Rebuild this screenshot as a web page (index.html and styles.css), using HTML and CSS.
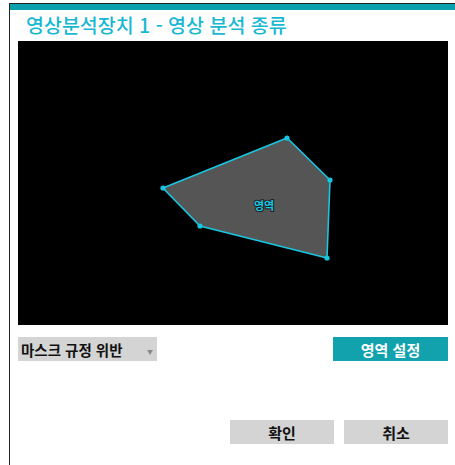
FILE: index.html
```html
<!DOCTYPE html>
<html lang="ko">
    <head>
        <title>영상 분석 종류</title>
        <link rel="stylesheet" href="styles.css">
    </head>

    <body>
        <div class="window">
            <div class="titleBar"></div>
            <div class="content">
                <h1 class="title">영상분석장치 1 - 영상 분석 종류</h1>

                <div class="preview">
                    <svg width="430" height="284" viewBox="0 0 430 284">
                        <polygon points="145,147 269,97 312,139 309,217 182,185" fill="#555555" stroke="#19c6e0" stroke-width="1.6"/>
                        <circle cx="145" cy="147" r="2.6" fill="#19c6e0"/>
                        <circle cx="269" cy="97" r="2.6" fill="#19c6e0"/>
                        <circle cx="312" cy="139" r="2.6" fill="#19c6e0"/>
                        <circle cx="309" cy="217" r="2.6" fill="#19c6e0"/>
                        <circle cx="182" cy="185" r="2.6" fill="#19c6e0"/>
                        <text x="246" y="169" class="zoneLabel">영역</text>
                    </svg>
                </div>

                <div class="controls">
                    <div class="dropdown">
                        <span>마스크 규정 위반</span>
                        <span class="arrow">&#9660;</span>
                    </div>
                    <button class="tealButton">영역 설정</button>
                </div>

                <div class="footer">
                    <button class="grayButton">확인</button>
                    <button class="grayButton">취소</button>
                </div>
            </div>
        </div>
    </body>
</html>
```

FILE: styles.css
```css
body {
    margin: 0;
    background-color: white;
    font-family: "Noto Sans CJK KR", "Noto Sans", sans-serif;
}
.window {
    margin-left: 9px;
    margin-top: 3px;
    border-left: 1px solid #222222;
    border-top: 1px solid #222222;
    height: 461px;
}
.titleBar {
    height: 6px;
    background-color: #0aa0ad;
}
.content {
    padding-left: 8px;
    padding-right: 7px;
}
.title {
    margin: 0;
    height: 31px;
    padding-left: 8px;
    font-size: 19.5px;
    font-weight: 500;
    line-height: 29px;
    color: #19b8d2;
}
.preview {
    width: 430px;
    height: 284px;
    background-color: black;
}
.preview svg {
    display: block;
}
.zoneLabel {
    font-size: 11px;
    font-weight: bold;
    fill: #19c6e0;
    stroke: #222222;
    stroke-width: 2px;
    paint-order: stroke;
    text-anchor: middle;
}
.controls {
    display: flex;
    justify-content: space-between;
    margin-top: 12px;
    height: 24px;
}
.dropdown {
    width: 139px;
    background-color: #d4d4d4;
    display: flex;
    justify-content: space-between;
    align-items: center;
    padding-left: 3px;
    padding-right: 4px;
    box-sizing: border-box;
    font-size: 14.5px;
    font-weight: bold;
    color: #111111;
}
.arrow {
    font-size: 6px;
    color: #888888;
    margin-top: 4px;
}
.tealButton {
    width: 115px;
    height: 24px;
    border: none;
    background-color: #12a2ad;
    color: white;
    font-family: inherit;
    font-size: 15px;
    font-weight: bold;
    padding: 0;
}
.footer {
    display: flex;
    justify-content: flex-end;
    gap: 10px;
    margin-top: 59px;
}
.grayButton {
    width: 104px;
    height: 24px;
    border: none;
    background-color: #d4d4d4;
    color: #111111;
    font-family: inherit;
    font-size: 15px;
    font-weight: bold;
    padding: 0;
}
```
